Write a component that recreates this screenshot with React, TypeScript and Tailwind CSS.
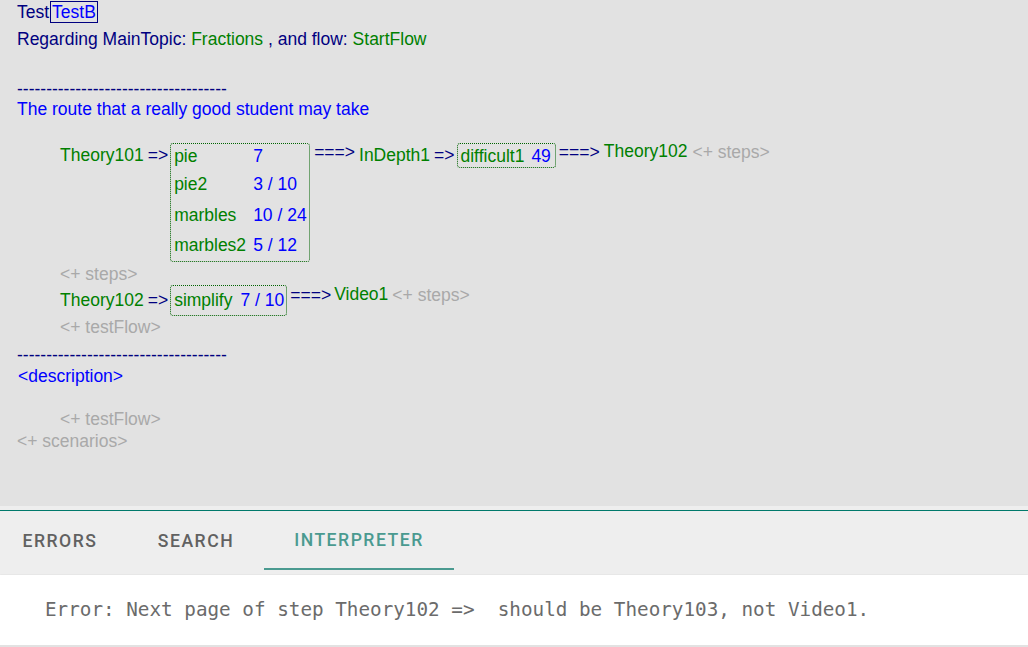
import React from "react";

const navy = "text-[#000080]";
const green = "text-[#008000]";
const blue = "text-[#0000ff]";
const gray = "text-[#a9a9a9]";

function Box({ children, className = "" }: { children: React.ReactNode; className?: string }) {
  return (
    <div className={`border border-dotted border-[#006400] rounded-[3px] ${className}`}>{children}</div>
  );
}

export default function App() {
  const dashes = "------------------------------------";
  const rows = [
    ["pie", "7", "h-[25px] pt-[2px]"],
    ["pie2", "3 / 10", "h-[31px] pt-[5px]"],
    ["marbles", "10 / 24", "h-[30px] pt-[5px]"],
    ["marbles2", "5 / 12", "h-[30px] pt-[5px]"],
  ];
  return (
    <div className="w-[1028px] h-[647px] overflow-hidden flex flex-col bg-[#e2e2e2]" style={{ fontFamily: "'Liberation Sans', Arial, sans-serif" }}>
      <div className="h-[506px] pl-[17px] text-[17.5px] leading-[20px]">
        <div className={`pt-[2px] ${navy}`}>
          Test
          <span className={`border border-[#000080] ${blue} ml-[1px] px-[1px]`}>TestB</span>
        </div>
        <div className={`mt-[7px] ${navy}`}>
          Regarding MainTopic: <span className={green}>Fractions</span> , and flow: <span className={green}>StartFlow</span>
        </div>
        <div className={`mt-[30px] ${navy}`}>{dashes}</div>
        <div className={blue}>The route that a really good student may take</div>

        <div className="pl-[43px] mt-[24px]">
          <div className="flex items-start">
            <span className={`${green} mt-[2px]`}>Theory101</span>
            <span className={`${navy} ml-[4px] mt-[2px]`}>=&gt;</span>
            <Box className="ml-[2px] w-[140px] pl-[3px]">
              {rows.map(([a, b, cls], i) => (
                <div key={i} className={`flex ${cls}`}>
                  <span className={`${green} w-[79px]`}>{a}</span>
                  <span className={blue}>{b}</span>
                </div>
              ))}
              <div className="h-[1px]" />
            </Box>
            <span className={`${navy} ml-[4px] -mt-[1px]`}>===&gt;</span>
            <span className={`${green} ml-[4px] mt-[2px]`}>InDepth1</span>
            <span className={`${navy} ml-[4px] mt-[2px]`}>=&gt;</span>
            <Box className="ml-[2px] h-[25px] pl-[3px] pr-[4px] flex items-start pt-[2px]">
              <span className={green}>difficult1</span>
              <span className={`${blue} ml-[7px]`}>49</span>
            </Box>
            <span className={`${navy} ml-[3px] -mt-[1px]`}>===&gt;</span>
            <span className={`${green} ml-[4px] -mt-[2px]`}>Theory102</span>
            <span className={`${gray} ml-[5px] -mt-[1px]`}>&lt;+ steps&gt;</span>
          </div>
          <div className={`${gray} mt-[2px]`}>&lt;+ steps&gt;</div>
          <div className="flex items-start mt-[1px]">
            <span className={`${green} mt-[5px]`}>Theory102</span>
            <span className={`${navy} ml-[4px] mt-[5px]`}>=&gt;</span>
            <Box className="ml-[2px] h-[31px] pl-[3px] pr-[2px] flex items-start pt-[4px]">
              <span className={green}>simplify</span>
              <span className={`${blue} ml-[8px]`}>7 / 10</span>
            </Box>
            <span className={`${navy} ml-[3px]`}>===&gt;</span>
            <span className={`${green} ml-[3px] -mt-[1px]`}>Video1</span>
            <span className={`${gray} ml-[4px]`}>&lt;+ steps&gt;</span>
          </div>
          <div className={`${gray} mt-[1px]`}>&lt;+ testFlow&gt;</div>
        </div>
        <div className={`mt-[8px] ${navy}`}>{dashes}</div>
        <div className={`mt-[1px] ${blue} pl-[1px]`}>&lt;description&gt;</div>
        <div className={`mt-[23px] pl-[43px] ${gray}`}>&lt;+ testFlow&gt;</div>
        <div className={`mt-[2px] ${gray}`}>&lt;+ scenarios&gt;</div>
      </div>

      <div className="bg-[#eeeeee] h-[4px]" />
      <div className="h-[1px] bg-[#00796b]" />
      <div className="bg-[#eeeeee] h-[64px] flex items-stretch" style={{ fontFamily: "Roboto, sans-serif" }}>
        <div className="w-[120px] flex items-center justify-center text-[17.6px] font-medium tracking-[1.5px] text-[#616161] pb-[4px]">ERRORS</div>
        <div className="w-[8px]" />
        <div className="w-[136px] flex items-center justify-center text-[17.6px] font-medium tracking-[1.5px] text-[#616161] pb-[4px]">SEARCH</div>
        <div className="w-[190px] flex flex-col">
          <div className="flex-1 flex items-center justify-center text-[17.6px] font-medium tracking-[1.5px] text-[#4a9a90] pt-[1px]">INTERPRETER</div>
          <div className="h-[2px] bg-[#4a9a90] mb-[5px]" />
        </div>
      </div>
      <div className="bg-white h-[70px] flex items-center pl-[45px] shadow-[0_1px_2px_rgba(0,0,0,0.4)]">
        <pre className="text-[19.3px] text-[#6b6b6b] m-0" style={{ fontFamily: "'DejaVu Sans Mono', 'Liberation Mono', monospace" }}>
          {"Error: Next page of step Theory102 =>  should be Theory103, not Video1."}
        </pre>
      </div>
      <div className="flex-1 bg-[#e2e2e2]" />
    </div>
  );
}
